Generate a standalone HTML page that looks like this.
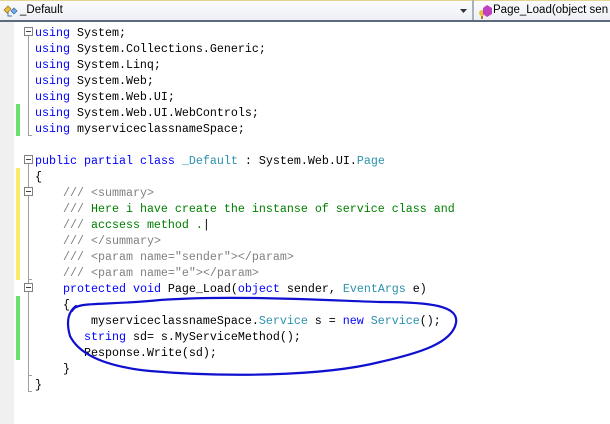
<!DOCTYPE html>
<html><head><style>
html,body{margin:0;padding:0;width:610px;height:424px;overflow:hidden;background:#fff;}
#hdr{position:absolute;left:0;top:0;width:610px;height:22px;background:linear-gradient(#fbfbfd,#eef0f5);border-top:1px solid #e5d592;border-bottom:2px solid #5c6a7e;box-sizing:border-box;font:11.5px "Liberation Sans",sans-serif;}
#hdr .l{position:absolute;left:20px;top:3px;color:#000;}
#hdr .r{position:absolute;left:493px;top:3px;color:#000;white-space:nowrap;}
#sep{position:absolute;left:472px;top:0;width:2px;height:20px;background:#a9b2c0;}
#gut{position:absolute;left:0;top:22px;width:14px;height:402px;background:#f0f0f0;}
.code{position:absolute;left:35px;top:25px;font:11.67px/16px "Liberation Mono",monospace;white-space:pre;color:#000;}
.k{color:#0000ff}.t{color:#2b91af}.c{color:#008000}.g{color:#808080}
.bar{position:absolute;left:16px;width:4px;}
.box{position:absolute;left:24px;width:7px;height:7px;border:1px solid #808080;background:#fff;}
.box:after{content:"";position:absolute;left:1px;top:3px;width:5px;height:1px;background:#444;}
.vl{position:absolute;left:28px;width:1px;background:#a0a0a0;}
.hl{position:absolute;left:28px;width:4px;height:1px;background:#a0a0a0;}
</style></head><body>
<div id="hdr"><span class="l">_Default</span><span class="r">Page_Load(object sen</span>
<svg style="position:absolute;left:3px;top:3px" width="16" height="14"><path d="M1 6 L5 2 L8 5 L4 9Z" fill="#e8c040" stroke="#a07010" stroke-width=".7"/><path d="M8 7 L11 4 L14 7 L11 10Z" fill="#7aaee8" stroke="#3060a0" stroke-width=".7"/><path d="M5 8 V12 H9" stroke="#4a70b0" fill="none"/></svg>
<svg style="position:absolute;left:460px;top:8px" width="8" height="5"><path d="M0 0H7L3.5 4Z" fill="#333"/></svg>
<svg style="position:absolute;left:477px;top:3px" width="16" height="15"><circle cx="5" cy="9" r="3" fill="#e8c040"/><path d="M5 12V15" stroke="#b08010" stroke-width="2"/><path d="M10 1L15 4V10L10 13L6 10V4Z" fill="#c040c0"/></svg>
</div>
<div id="sep"></div>
<div id="gut"></div>
<div class="bar" style="top:104px;height:32px;background:#6ce06c"></div>
<div class="bar" style="top:168px;height:112px;background:#f8ec6a"></div>
<div class="bar" style="top:296px;height:64px;background:#6ce06c"></div>
<div class="vl" style="top:33px;height:102px"></div><div class="hl" style="top:135px"></div>
<div class="box" style="top:27px"></div>
<div class="vl" style="top:161px;height:230px"></div><div class="hl" style="top:391px"></div>
<div class="box" style="top:155px"></div>
<div class="box" style="top:187px"></div>
<div class="hl" style="top:279px"></div>
<div class="box" style="top:283px"></div>
<div class="hl" style="top:375px"></div>
<div class="code"><span class="k">using</span> System;
<span class="k">using</span> System.Collections.Generic;
<span class="k">using</span> System.Linq;
<span class="k">using</span> System.Web;
<span class="k">using</span> System.Web.UI;
<span class="k">using</span> System.Web.UI.WebControls;
<span class="k">using</span> myserviceclassnameSpace;

<span class="k">public</span> <span class="k">partial</span> <span class="k">class</span> <span class="t">_Default</span> : System.Web.UI.<span class="t">Page</span>
{
    <span class="g">///</span> <span class="g">&lt;summary&gt;</span>
    <span class="g">///</span><span class="c"> Here i have create the instanse of service class and</span>
    <span class="g">///</span><span class="c"> accsess method .</span>|
    <span class="g">///</span> <span class="g">&lt;/summary&gt;</span>
    <span class="g">///</span> <span class="g">&lt;param name="sender"&gt;&lt;/param&gt;</span>
    <span class="g">///</span> <span class="g">&lt;param name="e"&gt;&lt;/param&gt;</span>
    <span class="k">protected</span> <span class="k">void</span> Page_Load(<span class="k">object</span> sender, <span class="t">EventArgs</span> e)
    {
        myserviceclassnameSpace.<span class="t">Service</span> s = <span class="k">new</span> <span class="t">Service</span>();
       <span class="k">string</span> sd= s.MyServiceMethod();
       Response.Write(sd);
    }
}</div>
<svg style="position:absolute;left:0;top:0" width="610" height="424"><path d="M72 311 C76 301 100 306 160 300 C230 295 320 300 380 302 C432 302 459 306 456 323 C452 343 420 353 380 362 C320 377 220 377 150 371 C100 366 78 352 70 336 C66 322 68 312 76 306" fill="none" stroke="#1010d0" stroke-width="2.2" stroke-linecap="round"/></svg>
</body></html>
